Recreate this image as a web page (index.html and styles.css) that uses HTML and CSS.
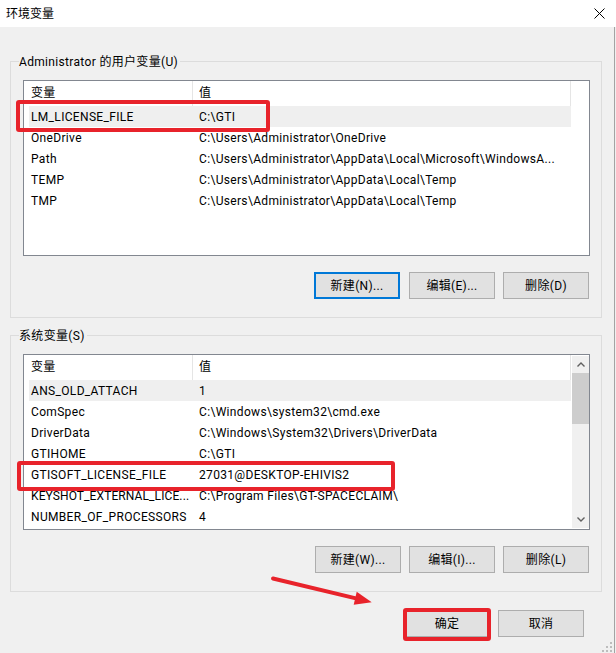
FILE: index.html
```html
<!DOCTYPE html>
<html lang="zh-CN">
<head>
<meta charset="utf-8">
<title>环境变量</title>
<link rel="stylesheet" href="styles.css">
</head>
<body>
<div class="titlebar">
  <span class="title">环境变量</span>
  <svg class="close" viewBox="0 0 11 11" width="11" height="11"><path d="M0.5 0.5 L10.5 10.5 M10.5 0.5 L0.5 10.5" stroke="#000" stroke-width="1" fill="none"/></svg>
</div>
<div class="dialog">
  <section class="group">
    <div class="legend">Administrator 的用户变量(U)</div>
    <div class="list">
      <div class="list-main">
        <div class="row head"><div class="c1">变量</div><div class="c2">值</div></div>
        <div class="row sel"><div class="c1">LM_LICENSE_FILE</div><div class="c2">C:\GTI</div></div>
        <div class="row"><div class="c1">OneDrive</div><div class="c2">C:\Users\Administrator\OneDrive</div></div>
        <div class="row"><div class="c1">Path</div><div class="c2">C:\Users\Administrator\AppData\Local\Microsoft\WindowsA...</div></div>
        <div class="row"><div class="c1">TEMP</div><div class="c2">C:\Users\Administrator\AppData\Local\Temp</div></div>
        <div class="row"><div class="c1">TMP</div><div class="c2">C:\Users\Administrator\AppData\Local\Temp</div></div>
      </div>
    </div>
    <div class="buttons">
      <button class="btn btn-default">新建(N)...</button>
      <button class="btn">编辑(E)...</button>
      <button class="btn">删除(D)</button>
    </div>
  </section>
  <section class="group">
    <div class="legend">系统变量(S)</div>
    <div class="list">
      <div class="list-main">
        <div class="row head"><div class="c1">变量</div><div class="c2">值</div></div>
        <div class="row sel"><div class="c1">ANS_OLD_ATTACH</div><div class="c2">1</div></div>
        <div class="row"><div class="c1">ComSpec</div><div class="c2">C:\Windows\system32\cmd.exe</div></div>
        <div class="row"><div class="c1">DriverData</div><div class="c2">C:\Windows\System32\Drivers\DriverData</div></div>
        <div class="row"><div class="c1">GTIHOME</div><div class="c2">C:\GTI</div></div>
        <div class="row"><div class="c1">GTISOFT_LICENSE_FILE</div><div class="c2">27031@DESKTOP-EHIVIS2</div></div>
        <div class="row"><div class="c1 tight">KEYSHOT_EXTERNAL_LICE...</div><div class="c2">C:\Program Files\GT-SPACECLAIM\</div></div>
        <div class="row"><div class="c1">NUMBER_OF_PROCESSORS</div><div class="c2">4</div></div>
      </div>
      <div class="scroll">
        <div class="sb-btn"><svg viewBox="0 0 8 5" width="8" height="5"><path d="M0.5 4.5 L4 1 L7.5 4.5" stroke="#606060" stroke-width="1.4" fill="none"/></svg></div>
        <div class="thumb"></div>
        <div class="track"></div>
        <div class="sb-btn"><svg viewBox="0 0 8 5" width="8" height="5"><path d="M0.5 0.5 L4 4 L7.5 0.5" stroke="#606060" stroke-width="1.4" fill="none"/></svg></div>
      </div>
    </div>
    <div class="buttons">
      <button class="btn">新建(W)...</button>
      <button class="btn">编辑(I)...</button>
      <button class="btn">删除(L)</button>
    </div>
  </section>
  <div class="footer">
    <button class="btn">确定</button>
    <button class="btn">取消</button>
  </div>
</div>
<svg class="grip" viewBox="0 0 10 10" width="10" height="10">
  <rect x="8" y="0" width="2" height="2" fill="#bdbdbd"/>
  <rect x="4" y="4" width="2" height="2" fill="#bdbdbd"/>
  <rect x="8" y="4" width="2" height="2" fill="#bdbdbd"/>
  <rect x="0" y="8" width="2" height="2" fill="#bdbdbd"/>
  <rect x="4" y="8" width="2" height="2" fill="#bdbdbd"/>
  <rect x="8" y="8" width="2" height="2" fill="#bdbdbd"/>
</svg>
<div class="mark mark-1"></div>
<div class="mark mark-2"></div>
<div class="mark mark-3"></div>
<svg class="arrow" viewBox="0 0 616 653" width="616" height="653">
  <line x1="273" y1="578.5" x2="357" y2="598.6" stroke="#e8232b" stroke-width="4" stroke-linecap="round"/>
  <polygon points="371.7,602.3 356.7,591.8 353.7,604.8" fill="#e8232b"/>
</svg>
</body>
</html>
```
FILE: styles.css
```css
* { box-sizing: border-box; }
html, body { margin: 0; padding: 0; }
body {
  width: 616px;
  height: 653px;
  overflow: hidden;
  position: relative;
  background: #f0f0f0;
  font-family: Roboto, "Noto Sans CJK SC", sans-serif;
  font-size: 12px;
  letter-spacing: 0.33px;
  color: #000;
}
.titlebar {
  height: 27px;
  background: #fff;
  display: flex;
  align-items: center;
  justify-content: space-between;
  padding: 0 11px 0 6px;
}
.title { line-height: 16px; letter-spacing: 0; }
.close { display: block; }
.dialog {
  width: 615px;
  height: 626px;
  border-right: 1px solid #a3a3a3;
  padding: 34px 0 0 10px;
}
.group {
  width: 592px;
  height: 257px;
  border: 1px solid #dcdcdc;
}
.group + .group { margin-top: 17px; }
.legend {
  width: max-content;
  height: 16px;
  line-height: 16px;
  margin: -8px 0 0 8px;
  padding-right: 2px;
  background: #f0f0f0;
}
.list {
  width: 567px;
  height: 176px;
  margin: 10px 0 0 12px;
  border: 1px solid #828790;
  background: #fff;
  display: flex;
  padding-left: 5px;
}
.list-main { width: 542px; flex: none; }
.row {
  display: flex;
  align-items: center;
  height: 21px;
  line-height: 16px;
  white-space: nowrap;
}
.row.head { height: 25px; align-items: stretch; }
.c1 { width: 164px; flex: none; padding-left: 2px; overflow: hidden; }
.c1.tight { letter-spacing: 0.1px; }
.c2 { flex: 1; padding-left: 6px; overflow: hidden; }
.head .c1, .head .c2 {
  display: flex;
  align-items: center;
  border-right: 1px solid #e5e5e5;
  padding-bottom: 1px;
}
.row.sel { background: #efefef; }
.scroll {
  width: 17px;
  flex: none;
  margin: 1px 0 1px 1px;
  background: #f0f0f0;
  display: flex;
  flex-direction: column;
}
.sb-btn {
  height: 17px;
  display: flex;
  align-items: center;
  justify-content: center;
}
.sb-btn svg { display: block; }
.thumb { height: 51px; background: #cdcdcd; }
.track { flex: 1; }
.buttons {
  display: flex;
  justify-content: flex-end;
  gap: 8px;
  margin-top: 16px;
  padding-right: 12px;
}
.btn {
  width: 86px;
  height: 27px;
  margin: 0;
  padding: 0;
  background: #e1e1e1;
  border: 1px solid #adadad;
  font: inherit;
  letter-spacing: inherit;
  color: #000;
  line-height: 16px;
}
.btn-default { border: 2px solid #0078d7; margin-right: 1px; }
.footer {
  display: flex;
  justify-content: flex-end;
  gap: 8px;
  margin-top: 18px;
  padding-right: 30px;
}
.grip { position: absolute; right: 4px; bottom: 1px; }
.mark {
  position: absolute;
  border: 4px solid #e8232b;
  border-radius: 3px;
}
.mark-1 { left: 16px; top: 100px; width: 254px; height: 32px; }
.mark-2 { left: 17px; top: 461px; width: 378px; height: 30px; }
.mark-3 { left: 403px; top: 608px; width: 88px; height: 33px; }
.arrow { position: absolute; left: 0; top: 0; pointer-events: none; }
```
